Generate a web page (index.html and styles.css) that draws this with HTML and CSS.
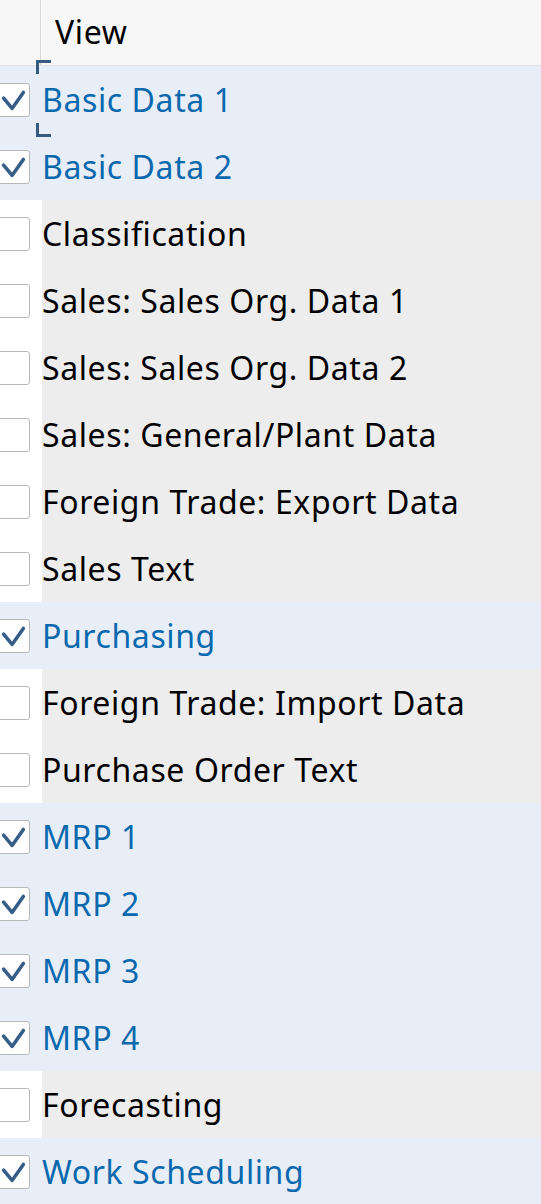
FILE: index.html
```html
<!DOCTYPE html>
<html lang="en">
<head>
<meta charset="utf-8">
<title>Views</title>
<link rel="stylesheet" href="styles.css">
</head>
<body>
<div class="table">
  <div class="header">
    <div class="hcell-sel"></div>
    <div class="hcell-view">View</div>
  </div>

  <div class="row selected focused">
    <div class="sel"><span class="box"><svg viewBox="0 0 34 34"><path d="M7 15 L16 26 L28 9"/></svg></span></div>
    <div class="label">Basic Data 1</div>
    <span class="focus-top"></span><span class="focus-bottom"></span>
  </div>
  <div class="row selected">
    <div class="sel"><span class="box"><svg viewBox="0 0 34 34"><path d="M7 15 L16 26 L28 9"/></svg></span></div>
    <div class="label">Basic Data 2</div>
  </div>
  <div class="row">
    <div class="sel"><span class="box"></span></div>
    <div class="label">Classification</div>
  </div>
  <div class="row">
    <div class="sel"><span class="box"></span></div>
    <div class="label">Sales: Sales Org. Data 1</div>
  </div>
  <div class="row">
    <div class="sel"><span class="box"></span></div>
    <div class="label">Sales: Sales Org. Data 2</div>
  </div>
  <div class="row">
    <div class="sel"><span class="box"></span></div>
    <div class="label">Sales: General/Plant Data</div>
  </div>
  <div class="row">
    <div class="sel"><span class="box"></span></div>
    <div class="label">Foreign Trade: Export Data</div>
  </div>
  <div class="row">
    <div class="sel"><span class="box"></span></div>
    <div class="label">Sales Text</div>
  </div>
  <div class="row selected">
    <div class="sel"><span class="box"><svg viewBox="0 0 34 34"><path d="M7 15 L16 26 L28 9"/></svg></span></div>
    <div class="label">Purchasing</div>
  </div>
  <div class="row">
    <div class="sel"><span class="box"></span></div>
    <div class="label">Foreign Trade: Import Data</div>
  </div>
  <div class="row">
    <div class="sel"><span class="box"></span></div>
    <div class="label">Purchase Order Text</div>
  </div>
  <div class="row selected">
    <div class="sel"><span class="box"><svg viewBox="0 0 34 34"><path d="M7 15 L16 26 L28 9"/></svg></span></div>
    <div class="label">MRP 1</div>
  </div>
  <div class="row selected">
    <div class="sel"><span class="box"><svg viewBox="0 0 34 34"><path d="M7 15 L16 26 L28 9"/></svg></span></div>
    <div class="label">MRP 2</div>
  </div>
  <div class="row selected">
    <div class="sel"><span class="box"><svg viewBox="0 0 34 34"><path d="M7 15 L16 26 L28 9"/></svg></span></div>
    <div class="label">MRP 3</div>
  </div>
  <div class="row selected">
    <div class="sel"><span class="box"><svg viewBox="0 0 34 34"><path d="M7 15 L16 26 L28 9"/></svg></span></div>
    <div class="label">MRP 4</div>
  </div>
  <div class="row">
    <div class="sel"><span class="box"></span></div>
    <div class="label">Forecasting</div>
  </div>
  <div class="row selected">
    <div class="sel"><span class="box"><svg viewBox="0 0 34 34"><path d="M7 15 L16 26 L28 9"/></svg></span></div>
    <div class="label">Work Scheduling</div>
  </div>
</div>
</body>
</html>
```
FILE: styles.css
```css
html, body {
  margin: 0;
  padding: 0;
  background: #ffffff;
  overflow: hidden;
}

body {
  font-family: "Noto Sans", "Open Sans", sans-serif;
  font-size: 32px;
  letter-spacing: 0.6px;
  color: #000000;
}

.table {
  display: flex;
  flex-direction: column;
}

.header {
  display: grid;
  grid-template-columns: 41px 1fr;
  height: 65px;
  background: #f7f7f7;
  border-bottom: 1px solid #e3e3e3;
}

.hcell-sel {
  border-right: 1px solid #d9d9d9;
}

.hcell-view {
  display: flex;
  align-items: center;
  padding-left: 14px;
  padding-bottom: 2px;
}

.row {
  position: relative;
  display: grid;
  grid-template-columns: 42px 1fr;
  height: 67px;
}

.sel {
  display: flex;
  align-items: center;
  background: #ffffff;
}

.label {
  display: flex;
  align-items: center;
  padding-left: 0;
  background: #ededed;
  white-space: nowrap;
  padding-bottom: 1px;
}

.row.selected .sel,
.row.selected .label {
  background: #e8eef7;
}

.row.selected .label {
  color: #0a69ae;
}

.box {
  display: block;
  box-sizing: border-box;
  width: 34px;
  height: 34px;
  margin-left: -4px;
  background: #ffffff;
  border: 1.5px solid #b8b8b8;
  border-radius: 3px;
}

.box svg {
  display: block;
  width: 32px;
  height: 32px;
}

.box svg path {
  fill: none;
  stroke: #365e88;
  stroke-width: 3.8;
  stroke-linecap: round;
  stroke-linejoin: round;
}

.focus-top,
.focus-bottom {
  position: absolute;
  z-index: 2;
  left: 36px;
  width: 15px;
  height: 14px;
  box-sizing: border-box;
  border-left: 3px solid #365b80;
}

.focus-top {
  top: -6px;
  border-top: 3px solid #365b80;
}

.focus-bottom {
  top: 57px;
  border-bottom: 3px solid #365b80;
}
```
